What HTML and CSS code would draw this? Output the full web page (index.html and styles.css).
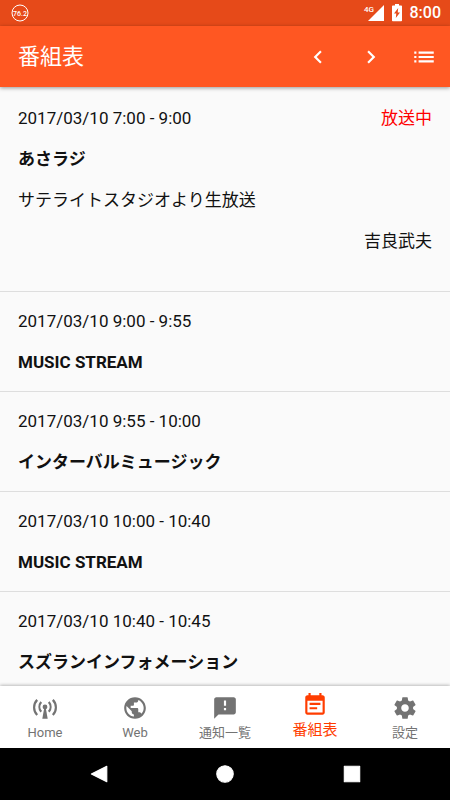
FILE: index.html
```html
<!doctype html>
<html lang="ja">
    <head>
        <meta charset="UTF-8" />
        <meta name="viewport" content="width=device-width, initial-scale=1.0" />
        <title>番組表</title>

        <link rel="stylesheet" href="styles.css">
    </head>
    <body>
        <div class="status-bar">
            <svg class="station" viewBox="0 0 18 18">
                <circle cx="9" cy="9" r="8" />
                <text x="9" y="12" text-anchor="middle">76.2</text>
            </svg>
            <div class="status-icons">
                <svg class="signal" viewBox="0 0 20 18">
                    <path d="M20 1v16H4z" />
                    <text x="0" y="8">4G</text>
                </svg>
                <svg class="battery" viewBox="0 0 10 18">
                    <path fill-rule="evenodd" d="M3 0h4v1.500h2.200q.8 0 .8.800v14.200q0 .8-.8.800H.8q-.8 0-.8-.8V2.300q0-.8.800-.8H3zM6.200 4 2 9.500h2.300L3.800 14 8 8.500H5.700z" />
                </svg>
                <span class="clock">8:00</span>
            </div>
        </div>

        <header class="toolbar">
            <h1 class="title">番組表</h1>
            <button class="tool-btn" aria-label="前の日">
                <svg viewBox="0 0 24 24"><path d="M15.41 7.41 14 6l-6 6 6 6 1.410-1.410L10.830 12z" /></svg>
            </button>
            <button class="tool-btn" aria-label="次の日">
                <svg viewBox="0 0 24 24"><path d="M10 6 8.590 7.410 13.170 12l-4.580 4.590L10 18l6-6z" /></svg>
            </button>
            <button class="tool-btn" aria-label="一覧">
                <svg viewBox="0 0 24 24"><path d="M3 13h2v-2H3v2zm0 4h2v-2H3v2zm0-8h2V7H3v2zm4 4h14v-2H7v2zm0 4h14v-2H7v2zM7 7v2h14V7H7z" /></svg>
            </button>
        </header>

        <ul class="program-list">
            <li class="program on-air">
                <div class="time"><span>2017/03/10 7:00 - 9:00</span> <span class="live">放送中</span></div>
                <div class="name">あさラジ</div>
                <div class="description">サテライトスタジオより生放送</div>
                <div class="personality">吉良武夫</div>
            </li>
            <li class="program">
                <div class="time">2017/03/10 9:00 - 9:55</div>
                <div class="name">MUSIC STREAM</div>
            </li>
            <li class="program">
                <div class="time">2017/03/10 9:55 - 10:00</div>
                <div class="name">インターバルミュージック</div>
            </li>
            <li class="program">
                <div class="time">2017/03/10 10:00 - 10:40</div>
                <div class="name">MUSIC STREAM</div>
            </li>
            <li class="program">
                <div class="time">2017/03/10 10:40 - 10:45</div>
                <div class="name">スズランインフォメーション</div>
            </li>
        </ul>

        <nav class="tabs">
            <a class="tab" href="#home">
                <svg viewBox="0 0 24 24">
                    <g class="waves">
                        <path d="M4.800 4.500a10 10 0 0 0 0 14M19.200 4.500a10 10 0 0 1 0 14" />
                        <path d="M8.500 6.500a7 7 0 0 0 0 9M15.500 6.500a7 7 0 0 1 0 9" />
                    </g>
                    <circle cx="12" cy="11" r="2.200" />
                    <path d="M11.300 12h1.400l1.800 10h-5z" />
                </svg>
                <span>Home</span>
            </a>
            <a class="tab" href="#web">
                <svg viewBox="0 0 24 24"><path d="M12 2C6.480 2 2 6.480 2 12s4.480 10 10 10 10-4.480 10-10S17.520 2 12 2zm-1 17.930c-3.950-.49-7-3.850-7-7.930 0-.62.080-1.210.21-1.790L9 15v1c0 1.100.9 2 2 2v1.930zm6.900-2.540c-.26-.81-1-1.390-1.900-1.390h-1v-3c0-.55-.45-1-1-1H8v-2h2c.55 0 1-.45 1-1V7h2c1.100 0 2-.9 2-2v-.41c2.930 1.190 5 4.060 5 7.410 0 2.080-.8 3.970-2.100 5.390z" /></svg>
                <span>Web</span>
            </a>
            <a class="tab" href="#notices">
                <svg viewBox="0 0 24 24"><path d="M20 2H4c-1.100 0-1.990.9-1.990 2L2 22l4-4h14c1.100 0 2-.9 2-2V4c0-1.100-.9-2-2-2zm-7 12h-2v-2h2v2zm0-4h-2V5h2v5z" /></svg>
                <span>通知一覧</span>
            </a>
            <a class="tab active" href="#programs">
                <svg viewBox="0 0 24 24"><path d="M17 10H7v2h10v-2zm2-7h-1V1h-2v2H8V1H6v2H5c-1.110 0-1.990.9-1.990 2L3 19c0 1.100.89 2 2 2h14c1.100 0 2-.9 2-2V5c0-1.100-.9-2-2-2zm0 16H5V8h14v11zm-5-5H7v2h7v-2z" /></svg>
                <span>番組表</span>
            </a>
            <a class="tab" href="#settings">
                <svg viewBox="0 0 24 24"><path d="M19.430 12.980c.04-.32.070-.64.070-.98s-.03-.66-.07-.98l2.110-1.650c.19-.15.240-.42.120-.64l-2-3.460c-.12-.22-.39-.3-.61-.22l-2.490 1c-.52-.4-1.080-.73-1.690-.98l-.38-2.650C14.460 2.180 14.250 2 14 2h-4c-.25 0-.46.180-.49.420l-.38 2.650c-.61.250-1.170.59-1.690.98l-2.490-1c-.23-.09-.49 0-.61.220l-2 3.460c-.13.220-.07.490.12.640l2.110 1.650c-.04.32-.07.650-.07.980s.03.660.07.980l-2.110 1.650c-.19.150-.24.420-.12.640l2 3.460c.12.220.39.300.61.220l2.490-1c.52.400 1.080.730 1.690.980l.38 2.650c.03.240.24.420.49.420h4c.25 0 .46-.18.490-.42l.38-2.650c.61-.25 1.170-.59 1.690-.98l2.490 1c.23.090.49 0 .61-.22l2-3.460c.12-.22.070-.49-.12-.64l-2.110-1.650zM12 15.500c-1.930 0-3.500-1.570-3.500-3.500s1.570-3.500 3.500-3.500 3.500 1.570 3.500 3.500-1.570 3.500-3.500 3.500z" /></svg>
                <span>設定</span>
            </a>
        </nav>

        <div class="system-nav">
            <button aria-label="戻る">
                <svg viewBox="0 0 20 20"><path d="M18 3v14L4 10z" /></svg>
            </button>
            <button aria-label="ホーム">
                <svg viewBox="0 0 20 20"><circle cx="10" cy="10" r="7.500" /></svg>
            </button>
            <button aria-label="最近のアプリ">
                <svg viewBox="0 0 20 20"><path d="M3 3h14v14H3z" /></svg>
            </button>
        </div>
    </body>
</html>
```

FILE: styles.css
```css
* {
    box-sizing: border-box;
}

body {
    display: flex;
    flex-direction: column;
    height: 100vh;
    margin: 0;
    background: #fafafa;
    color: #111;
    font-family: Roboto, "Noto Sans CJK JP", sans-serif;
    font-size: 17px;
    line-height: 24px;
}

svg {
    display: block;
    fill: currentColor;
}

button {
    padding: 0;
    border: none;
    background: none;
    color: inherit;
    cursor: pointer;
}

/* status bar */
.status-bar {
    display: flex;
    flex: none;
    align-items: center;
    justify-content: space-between;
    height: 26px;
    padding: 0 9px 0 11px;
    background: #e64a19;
    color: #fff;
}

.station {
    width: 18px;
    height: 18px;
}

.station circle {
    fill: none;
    stroke: currentColor;
}

.station text {
    font-size: 7px;
    font-weight: 500;
}

.status-icons {
    display: flex;
    align-items: center;
    gap: 8px;
}

.signal {
    width: 20px;
    height: 18px;
    overflow: visible;
}

.signal text {
    font-size: 8px;
    font-weight: 500;
}

.battery {
    width: 10px;
    height: 18px;
}

.clock {
    font-size: 16px;
    font-weight: 500;
}

/* toolbar */
.toolbar {
    position: relative;
    display: flex;
    flex: none;
    align-items: center;
    gap: 27px;
    height: 61px;
    padding: 0 13px 0 18px;
    background: #ff5722;
    color: #fff;
    box-shadow: 0 1px 4px rgba(0, 0, 0, 0.4);
}

.title {
    flex: 1;
    margin: 0;
    font-size: 22px;
    font-weight: 400;
}

.tool-btn svg {
    width: 26px;
    height: 26px;
}

/* program list */
.program-list {
    flex: 1;
    min-height: 0;
    margin: 0;
    padding: 0;
    list-style: none;
    overflow-y: auto;
    scrollbar-width: none;
}

.program {
    display: flex;
    flex-direction: column;
    gap: 17px;
    padding: 17px 18px;
    border-bottom: 1px solid #dedede;
}

.program.on-air {
    padding-top: 19px;
    padding-bottom: 38px;
}

.time {
    display: flex;
    justify-content: space-between;
}

.live {
    color: #f00;
}

.name {
    font-weight: 700;
}

.personality {
    text-align: right;
}

/* bottom tabs */
.tabs {
    position: relative;
    display: flex;
    flex: none;
    height: 62px;
    background: #fff;
    box-shadow: 0 -1px 3px rgba(0, 0, 0, 0.25);
}

.tab {
    display: flex;
    flex: 1;
    flex-direction: column;
    align-items: center;
    padding-top: 9px;
    color: #737373;
    font-size: 13px;
    text-decoration: none;
}

.tab svg {
    width: 26px;
    height: 26px;
}

.tab.active {
    padding-top: 6px;
    color: #ff3d00;
    font-size: 15px;
}

.waves {
    fill: none;
    stroke: currentColor;
    stroke-width: 2;
}

/* system navigation */
.system-nav {
    display: flex;
    flex: none;
    align-items: center;
    justify-content: center;
    gap: 105px;
    height: 52px;
    background: #000;
    color: #fff;
}

.system-nav svg {
    width: 22px;
    height: 22px;
    stroke: currentColor;
    stroke-linejoin: round;
}
```
